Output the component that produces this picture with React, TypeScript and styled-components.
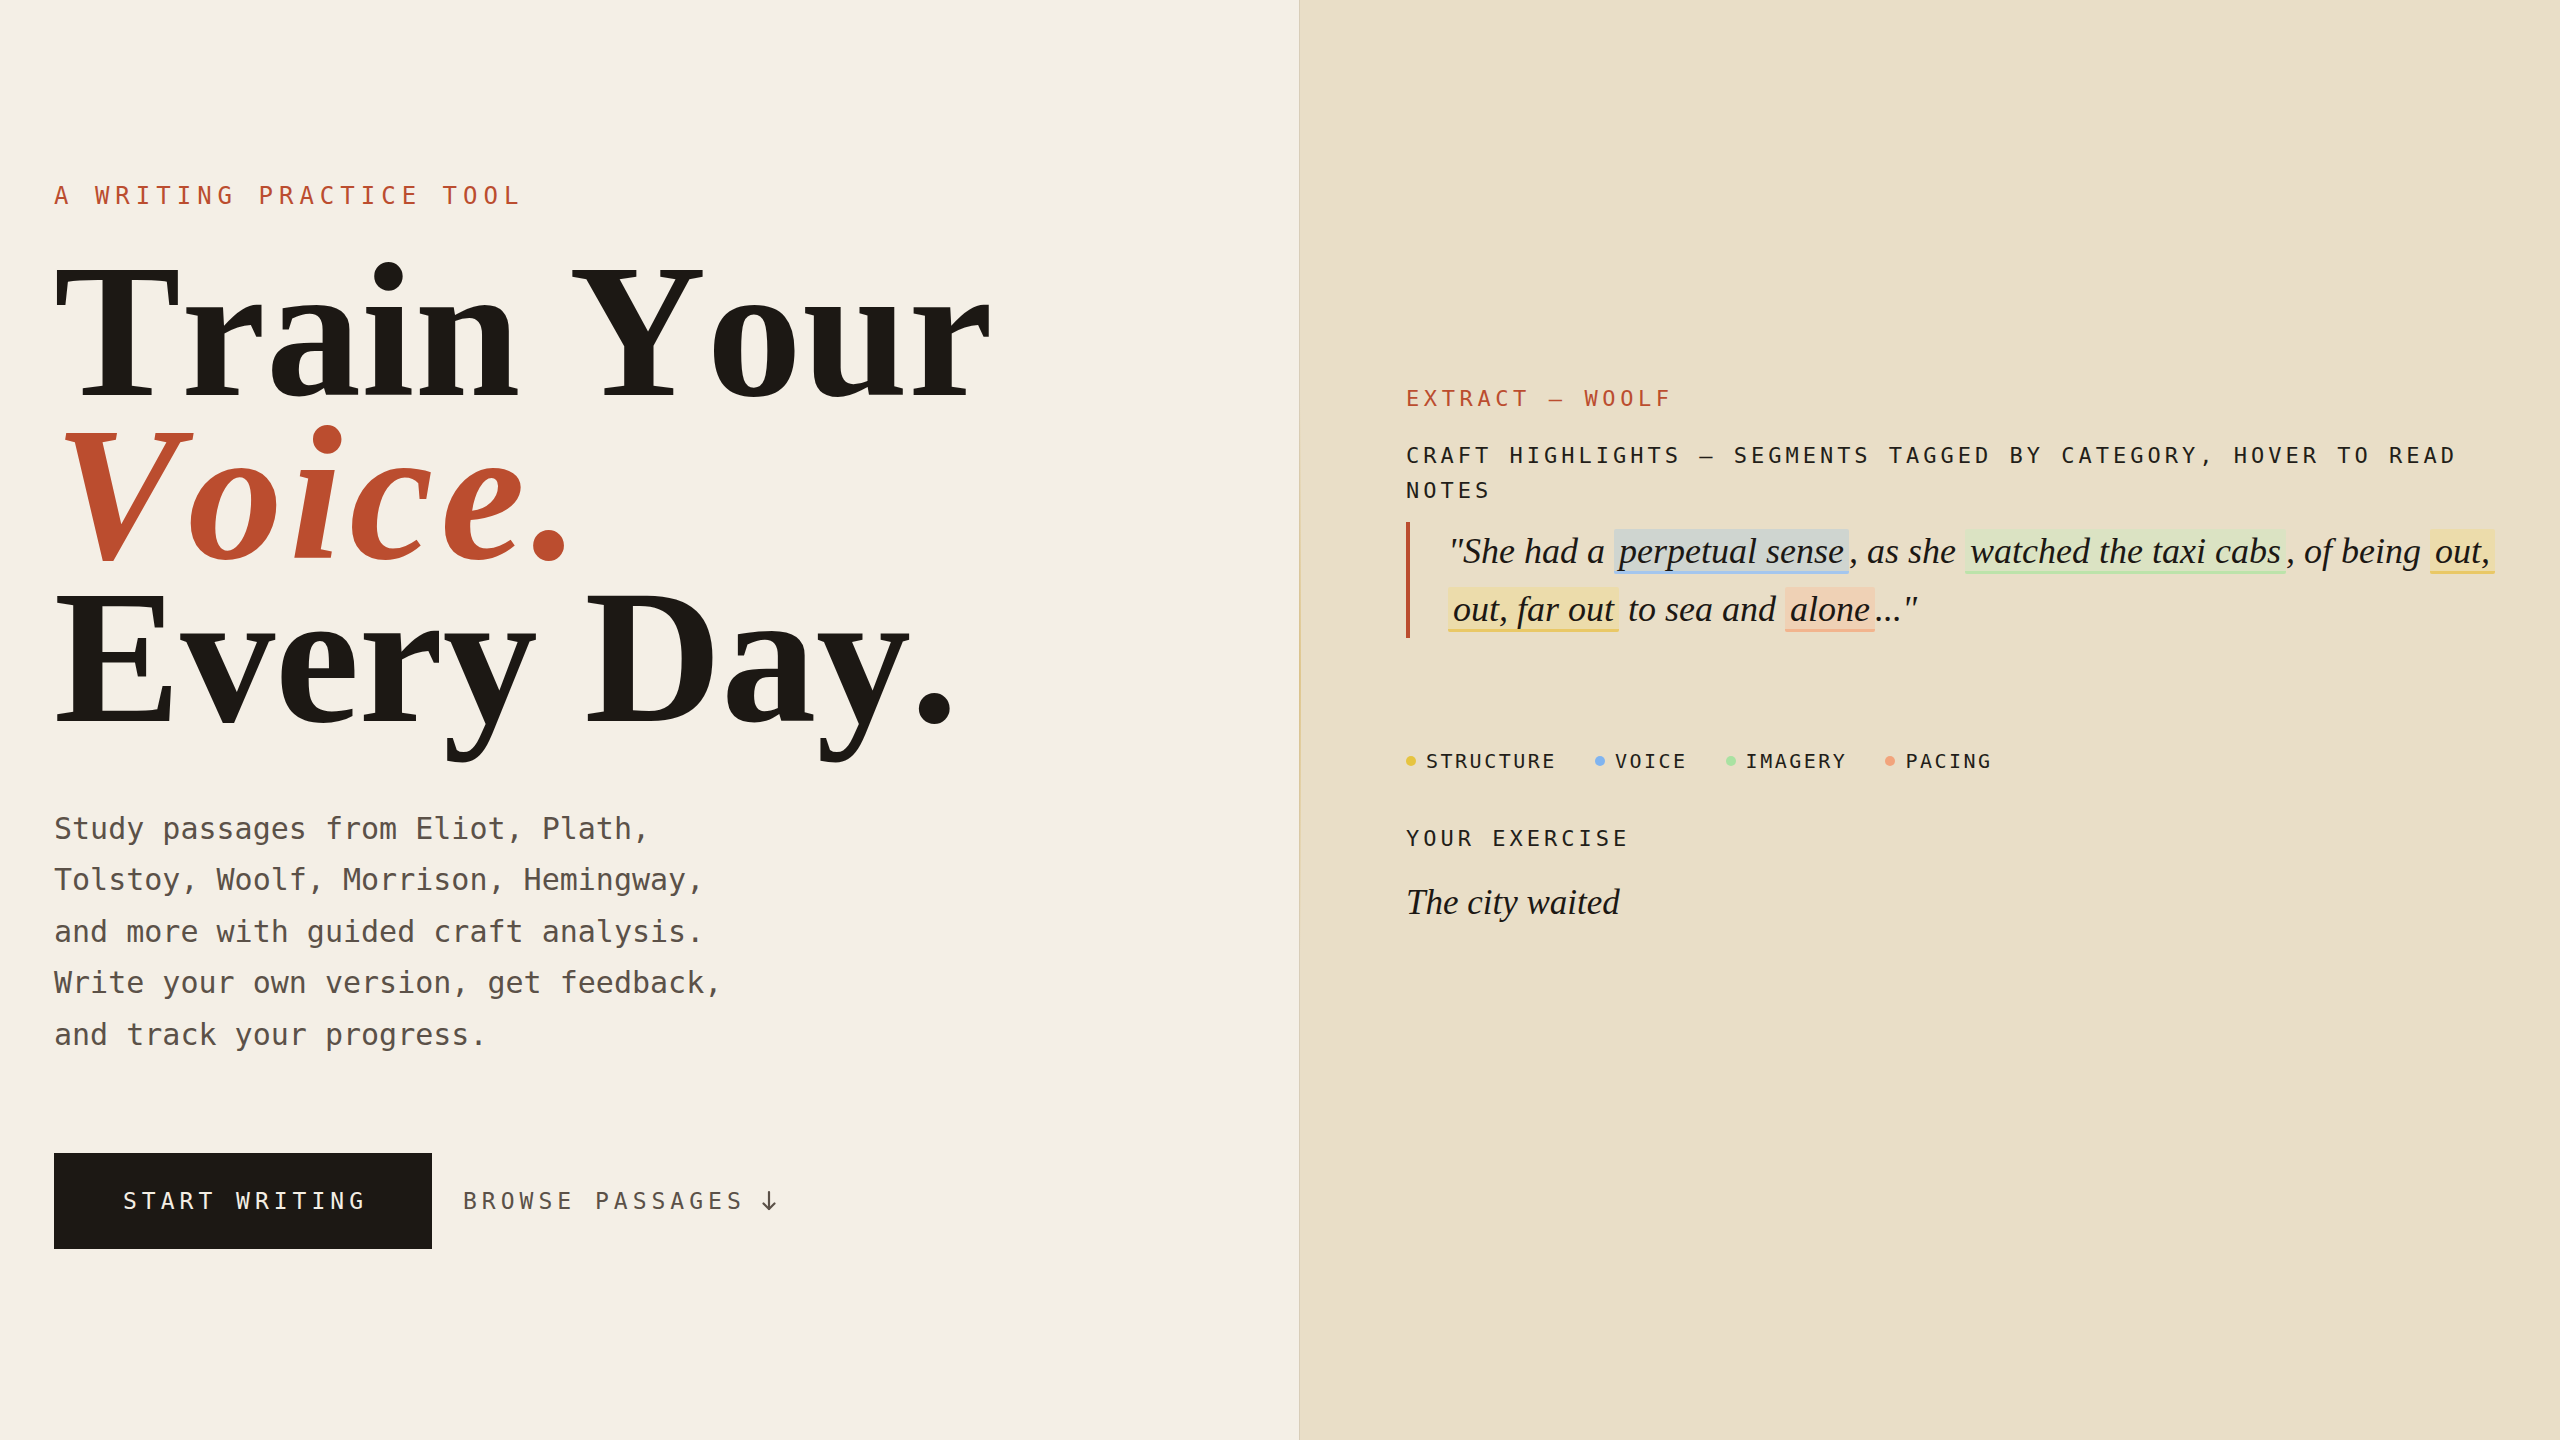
import React from 'react';
import styled, { createGlobalStyle } from 'styled-components';

const mono = `"DejaVu Sans Mono", "Liberation Mono", monospace`;
const serif = `"Liberation Serif", "Times New Roman", serif`;

type Tone = 'structure' | 'voice' | 'imagery' | 'pacing';

const tones: Record<Tone, { bg: string; line: string; dot: string }> = {
  structure: { bg: '#ecdcab', line: '#e9c866', dot: '#e6c440' },
  voice: { bg: '#cfd5d0', line: '#a4c6ee', dot: '#80b4f0' },
  imagery: { bg: '#dbe3c3', line: '#bce3aa', dot: '#a9e2a2' },
  pacing: { bg: '#efd1b5', line: '#f2b48e', dot: '#f2a47c' },
};

const GlobalStyle = createGlobalStyle`
  html, body {
    margin: 0;
    padding: 0;
  }
  body {
    background: #f4efe6;
  }
  * {
    box-sizing: border-box;
  }
`;

const Page = styled.div`
  display: grid;
  grid-template-columns: 1300px 1fr;
  width: 100%;
  height: 100vh;
  min-height: 1440px;
`;

const Intro = styled.section`
  position: relative;
  display: flex;
  flex-direction: column;
  justify-content: center;
  padding: 0 54px 10px;
  background: #f4efe6;
  border-right: 1px solid #d8cdb8;

  &::after {
    content: '';
    position: absolute;
    top: 28%;
    right: -2px;
    width: 2px;
    height: 38%;
    background: linear-gradient(
      to bottom,
      rgba(220, 190, 120, 0),
      rgba(220, 190, 120, 0.7),
      rgba(220, 190, 120, 0)
    );
  }
`;

const Eyebrow = styled.div<{ $size?: number; $spacing?: number }>`
  font-family: ${mono};
  font-size: ${p => p.$size ?? 24}px;
  letter-spacing: ${p => p.$spacing ?? 6}px;
  line-height: 1.3;
  text-transform: uppercase;
  color: #bb4d2f;
`;

const Headline = styled.h1`
  margin: 37px 0 0;
  font-family: ${serif};
  font-weight: 700;
  font-size: 190px;
  line-height: 163px;
  font-kerning: none;
  color: #1c1814;
`;

const HeadLine = styled.span<{ $accent?: boolean; $tracking: number }>`
  display: block;
  letter-spacing: ${p => p.$tracking}px;
  font-style: ${p => (p.$accent ? 'italic' : 'normal')};
  color: ${p => (p.$accent ? '#bb4d2f' : 'inherit')};
`;

const Lede = styled.p`
  margin: 64px 0 0;
  max-width: 700px;
  font-family: ${mono};
  font-size: 30px;
  line-height: 51.6px;
  color: #5b5148;
`;

const Actions = styled.div`
  display: flex;
  align-items: center;
  gap: 31px;
  margin-top: 92px;
`;

const PrimaryButton = styled.button`
  height: 96px;
  padding: 0 64px 0 69px;
  border: none;
  background: #1c1814;
  color: #f4eee4;
  font-family: ${mono};
  font-size: 23px;
  letter-spacing: 5px;
  cursor: pointer;
`;

const GhostButton = styled.button`
  display: flex;
  align-items: center;
  gap: 15px;
  padding: 0;
  border: none;
  background: none;
  color: #5b5148;
  font-family: ${mono};
  font-size: 23px;
  letter-spacing: 5px;
  cursor: pointer;

  svg {
    width: 16px;
    height: 22px;
  }
`;

const Study = styled.section`
  display: flex;
  flex-direction: column;
  justify-content: center;
  padding: 3px 44px 0 106px;
  background: #e9dec7;
`;

const Caption = styled.div<{ $gap?: number }>`
  margin-top: ${p => p.$gap ?? 0}px;
  font-family: ${mono};
  font-size: 22px;
  letter-spacing: 4px;
  line-height: 34.5px;
  text-transform: uppercase;
  color: #231e19;
`;

const Quote = styled.blockquote`
  margin: 14px 0 0;
  padding-left: 38px;
  border-left: 4px solid #bb4d2f;
  font-family: ${serif};
  font-style: italic;
  font-size: 36px;
  line-height: 58px;
  color: #1c1814;
`;

const Mark = styled.mark<{ $tone: Tone }>`
  padding: 2px 5px 0;
  border-radius: 2px;
  border-bottom: 3px solid ${p => tones[p.$tone].line};
  background: ${p => tones[p.$tone].bg};
  color: inherit;
  box-decoration-break: clone;
  -webkit-box-decoration-break: clone;
`;

const Legend = styled.ul`
  display: flex;
  gap: 38px;
  margin: 108px 0 0;
  padding: 0;
  list-style: none;
`;

const LegendItem = styled.li<{ $tone: Tone }>`
  display: flex;
  align-items: center;
  gap: 10px;
  font-family: ${mono};
  font-size: 20px;
  letter-spacing: 2.5px;
  line-height: 30px;
  color: #231e19;

  &::before {
    content: '';
    width: 10px;
    height: 10px;
    border-radius: 50%;
    background: ${p => tones[p.$tone].dot};
  }
`;

const Draft = styled.div`
  min-height: 180px;
  margin-top: 21px;
  font-family: ${serif};
  font-style: italic;
  font-size: 35px;
  line-height: 50px;
  color: #1c1814;
`;

const legend: { tone: Tone; label: string }[] = [
  { tone: 'structure', label: 'STRUCTURE' },
  { tone: 'voice', label: 'VOICE' },
  { tone: 'imagery', label: 'IMAGERY' },
  { tone: 'pacing', label: 'PACING' },
];

const ArrowDown = () => (
  <svg viewBox="0 0 16 22" fill="none" stroke="currentColor" strokeWidth="2.2" strokeLinecap="round" strokeLinejoin="round">
    <path d="M8 2v17" />
    <path d="M2.5 13.5L8 19l5.5-5.5" />
  </svg>
);

const App = () => (
  <>
    <GlobalStyle />
    <Page>
      <Intro>
        <Eyebrow>A Writing Practice Tool</Eyebrow>
        <Headline>
          <HeadLine $tracking={0.5}>Train Your</HeadLine>
          <HeadLine $accent $tracking={6.9}>Voice.</HeadLine>
          <HeadLine $tracking={-0.4}>Every Day.</HeadLine>
        </Headline>
        <Lede>
          Study passages from Eliot, Plath, Tolstoy, Woolf, Morrison, Hemingway,
          and more with guided craft analysis. Write your own version, get
          feedback, and track your progress.
        </Lede>
        <Actions>
          <PrimaryButton>START WRITING</PrimaryButton>
          <GhostButton>
            BROWSE PASSAGES
            <ArrowDown />
          </GhostButton>
        </Actions>
      </Intro>

      <Study>
        <Eyebrow $size={22} $spacing={4.6}>Extract — Woolf</Eyebrow>
        <Caption $gap={25}>
          Craft highlights — segments tagged by category, hover to read notes
        </Caption>
        <Quote>
          "She had a <Mark $tone="voice">perpetual sense</Mark>, as she{' '}
          <Mark $tone="imagery">watched the taxi cabs</Mark>, of being{' '}
          <Mark $tone="structure">out, out, far out</Mark> to sea and{' '}
          <Mark $tone="pacing">alone</Mark>..."
        </Quote>
        <Legend>
          {legend.map(item => (
            <LegendItem key={item.tone} $tone={item.tone}>
              {item.label}
            </LegendItem>
          ))}
        </Legend>
        <Caption $gap={46}>Your exercise</Caption>
        <Draft>The city waited</Draft>
      </Study>
    </Page>
  </>
);

export default App;
